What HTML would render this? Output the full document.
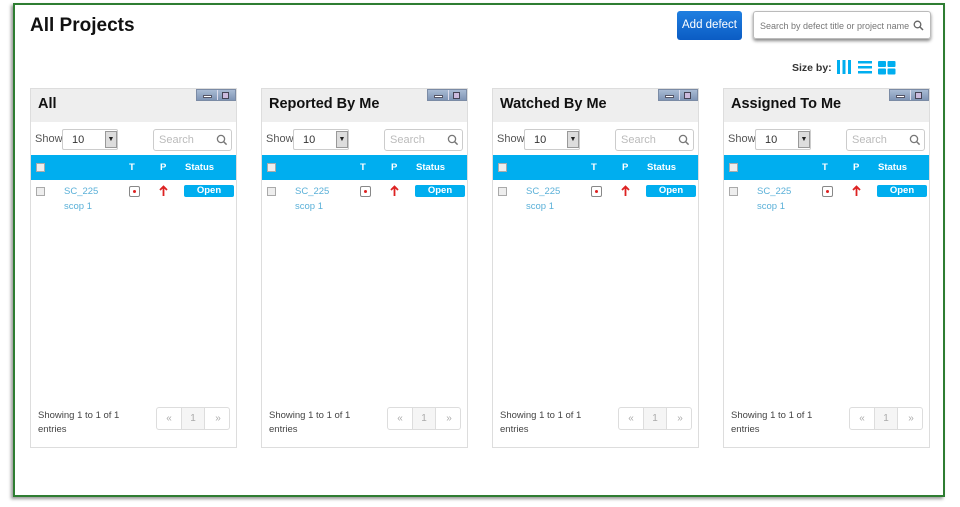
<!DOCTYPE html>
<html><head><meta charset="utf-8"><style>
*{box-sizing:border-box;margin:0;padding:0}
body{width:960px;height:507px;background:#fff;font-family:"Liberation Sans",Arial,sans-serif;position:relative;overflow:hidden}
.frame{position:absolute;left:13px;top:3px;width:932px;height:494px;border:2px solid #2e7d32;box-shadow:-2px 2px 3px #999}
h1{position:absolute;left:30px;top:15px;font-size:19px;font-weight:bold;color:#111}
.add{position:absolute;left:677px;top:11px;width:65px;height:29px;background:linear-gradient(#1f7fe0,#0b5cc4);border-radius:3px;color:#fff;font-size:11.5px;line-height:29px;text-align:center}
.gs{position:absolute;left:753px;top:11px;width:178px;height:28px;border:1px solid #bbb;border-radius:3px;box-shadow:0 2px 3px #888;font-size:9px;color:#777;line-height:28px;padding-left:6px;white-space:nowrap}
.sb{position:absolute;left:792px;top:62px;font-size:10.5px;font-weight:bold;color:#333}
.p{position:absolute;top:88px;width:207px;height:360px;border:1px solid #ddd;background:#fff}
.hd{position:absolute;left:0;top:0;width:205px;height:33px;background:#eee}
.hd b{position:absolute;left:7px;top:7px;font-size:14.5px;color:#111}
.wb{position:absolute;left:165px;top:0;width:40px;height:12px;background:linear-gradient(#a9bbd4,#7f95b5);border:1px solid #7b8ba5}
.wb i{position:absolute;left:6px;top:5px;width:9px;height:3px;background:#fff;border:1px solid #556}
.wb s{position:absolute;left:20px;top:0;height:10px;border-left:1px solid #dde}
.wb u{position:absolute;left:25px;top:2px;width:7px;height:7px;border:1px solid #445;background:#cbd}
.show{position:absolute;left:4px;top:44px;font-size:11px;color:#555}
.sel{position:absolute;left:31px;top:40px;width:56px;height:21px;border:1px solid #ccc;border-radius:2px;font-size:11px;color:#333;padding:4px 0 0 9px}
.sel span{position:absolute;right:0;top:1px;width:12px;height:17px;background:#ddd;border:1px solid #999;font-size:7px;text-align:center;line-height:16px;color:#222}
.srch{position:absolute;left:122px;top:40px;width:79px;height:22px;border:1px solid #ccc;border-radius:3px;font-size:11px;color:#bbb;padding:4px 0 0 5px}
.srch svg{position:absolute;right:3px;top:4px}
.bar{position:absolute;left:0;top:66px;width:205px;height:25px;background:#00aeef;color:#fff;font-size:9.5px;font-weight:bold}
.bar span{position:absolute;top:7px}
.cb{position:absolute;width:9px;height:9px;border:1px solid #aaa;background:#eee}
.lk{position:absolute;left:33px;font-size:9.5px;color:#5ab0d8}
.ti{position:absolute;left:98px;top:97px;width:11px;height:11px;border:1px solid #888;border-radius:2px}
.ti:after{content:"";position:absolute;left:3px;top:3px;width:3px;height:3px;background:#d22;border-radius:50%}
.ar{position:absolute;left:128px;top:96px}
.op{position:absolute;left:153px;top:96px;width:50px;height:12px;background:#00aeef;border-radius:2px;color:#fff;font-size:9.5px;font-weight:bold;text-align:center;line-height:12px}
.ft{position:absolute;left:7px;top:320px;font-size:9.5px;color:#444;line-height:14px}
.pg{position:absolute;left:125px;top:318px;width:74px;height:23px;border:1px solid #ddd;border-radius:3px;font-size:10px;color:#aaa}
.pg span{position:absolute;top:5px;width:24px;text-align:center}
.pg .m{left:24px;top:0;height:21px;background:#f5f5f5;border-left:1px solid #ddd;border-right:1px solid #ddd;padding-top:5px}
</style></head><body>
<div class="frame"></div>
<h1>All Projects</h1>
<div class="add">Add defect</div>
<div class="gs">Search by defect title or project name<svg style="position:absolute;right:6px;top:8px" width="11" height="11" viewBox="0 0 11 11"><circle cx="4.5" cy="4.5" r="3.3" fill="none" stroke="#666" stroke-width="1.3"/><path d="M7 7l3 3" stroke="#666" stroke-width="1.5"/></svg></div>
<div class="sb">Size by:</div>
<svg style="position:absolute;left:837px;top:60px" width="60" height="15" viewBox="0 0 60 15"><g fill="#00aeef"><rect x="0" y="0" width="3" height="14"/><rect x="5.5" y="0" width="3" height="14"/><rect x="11" y="0" width="3" height="14"/><rect x="21" y="1" width="14" height="2.5"/><rect x="21" y="6" width="14" height="2.5"/><rect x="21" y="11" width="14" height="2.5"/><rect x="41" y="1" width="8" height="6" rx="1"/><rect x="50.5" y="1" width="8" height="6" rx="1"/><rect x="41" y="8.5" width="8" height="6" rx="1"/><rect x="50.5" y="8.5" width="8" height="6" rx="1"/></g></svg>

<div class="p" style="left:30px"><div class="hd"><b>All</b><div class="wb"><i></i><s></s><u></u></div></div>
<div class="show">Show</div><div class="sel">10<span>▼</span></div><div class="srch">Search<svg width="12" height="12" viewBox="0 0 12 12"><circle cx="5" cy="5" r="3.6" fill="none" stroke="#777" stroke-width="1.3"/><path d="M7.6 7.6l3 3" stroke="#777" stroke-width="1.5"/></svg></div>
<div class="bar"><div class="cb" style="left:5px;top:8px"></div><span style="left:98px">T</span><span style="left:129px">P</span><span style="left:154px">Status</span></div>
<div class="cb" style="left:5px;top:98px"></div><div class="lk" style="top:97px">SC_225</div><div class="lk" style="top:112px">scop 1</div><div class="ti"></div><svg class="ar" width="9" height="12" viewBox="0 0 9 12"><path d="M4.5 1.5V11M1 5l3.5-3.5L8 5" fill="none" stroke="#d22" stroke-width="1.8"/></svg><div class="op">Open</div>
<div class="ft">Showing 1 to 1 of 1<br>entries</div><div class="pg"><span style="left:0">«</span><span class="m">1</span><span style="left:49px">»</span></div></div>

<div class="p" style="left:261px"><div class="hd"><b>Reported By Me</b><div class="wb"><i></i><s></s><u></u></div></div>
<div class="show">Show</div><div class="sel">10<span>▼</span></div><div class="srch">Search<svg width="12" height="12" viewBox="0 0 12 12"><circle cx="5" cy="5" r="3.6" fill="none" stroke="#777" stroke-width="1.3"/><path d="M7.6 7.6l3 3" stroke="#777" stroke-width="1.5"/></svg></div>
<div class="bar"><div class="cb" style="left:5px;top:8px"></div><span style="left:98px">T</span><span style="left:129px">P</span><span style="left:154px">Status</span></div>
<div class="cb" style="left:5px;top:98px"></div><div class="lk" style="top:97px">SC_225</div><div class="lk" style="top:112px">scop 1</div><div class="ti"></div><svg class="ar" width="9" height="12" viewBox="0 0 9 12"><path d="M4.5 1.5V11M1 5l3.5-3.5L8 5" fill="none" stroke="#d22" stroke-width="1.8"/></svg><div class="op">Open</div>
<div class="ft">Showing 1 to 1 of 1<br>entries</div><div class="pg"><span style="left:0">«</span><span class="m">1</span><span style="left:49px">»</span></div></div>

<div class="p" style="left:492px"><div class="hd"><b>Watched By Me</b><div class="wb"><i></i><s></s><u></u></div></div>
<div class="show">Show</div><div class="sel">10<span>▼</span></div><div class="srch">Search<svg width="12" height="12" viewBox="0 0 12 12"><circle cx="5" cy="5" r="3.6" fill="none" stroke="#777" stroke-width="1.3"/><path d="M7.6 7.6l3 3" stroke="#777" stroke-width="1.5"/></svg></div>
<div class="bar"><div class="cb" style="left:5px;top:8px"></div><span style="left:98px">T</span><span style="left:129px">P</span><span style="left:154px">Status</span></div>
<div class="cb" style="left:5px;top:98px"></div><div class="lk" style="top:97px">SC_225</div><div class="lk" style="top:112px">scop 1</div><div class="ti"></div><svg class="ar" width="9" height="12" viewBox="0 0 9 12"><path d="M4.5 1.5V11M1 5l3.5-3.5L8 5" fill="none" stroke="#d22" stroke-width="1.8"/></svg><div class="op">Open</div>
<div class="ft">Showing 1 to 1 of 1<br>entries</div><div class="pg"><span style="left:0">«</span><span class="m">1</span><span style="left:49px">»</span></div></div>

<div class="p" style="left:723px"><div class="hd"><b>Assigned To Me</b><div class="wb"><i></i><s></s><u></u></div></div>
<div class="show">Show</div><div class="sel">10<span>▼</span></div><div class="srch">Search<svg width="12" height="12" viewBox="0 0 12 12"><circle cx="5" cy="5" r="3.6" fill="none" stroke="#777" stroke-width="1.3"/><path d="M7.6 7.6l3 3" stroke="#777" stroke-width="1.5"/></svg></div>
<div class="bar"><div class="cb" style="left:5px;top:8px"></div><span style="left:98px">T</span><span style="left:129px">P</span><span style="left:154px">Status</span></div>
<div class="cb" style="left:5px;top:98px"></div><div class="lk" style="top:97px">SC_225</div><div class="lk" style="top:112px">scop 1</div><div class="ti"></div><svg class="ar" width="9" height="12" viewBox="0 0 9 12"><path d="M4.5 1.5V11M1 5l3.5-3.5L8 5" fill="none" stroke="#d22" stroke-width="1.8"/></svg><div class="op">Open</div>
<div class="ft">Showing 1 to 1 of 1<br>entries</div><div class="pg"><span style="left:0">«</span><span class="m">1</span><span style="left:49px">»</span></div></div>
</body></html>
